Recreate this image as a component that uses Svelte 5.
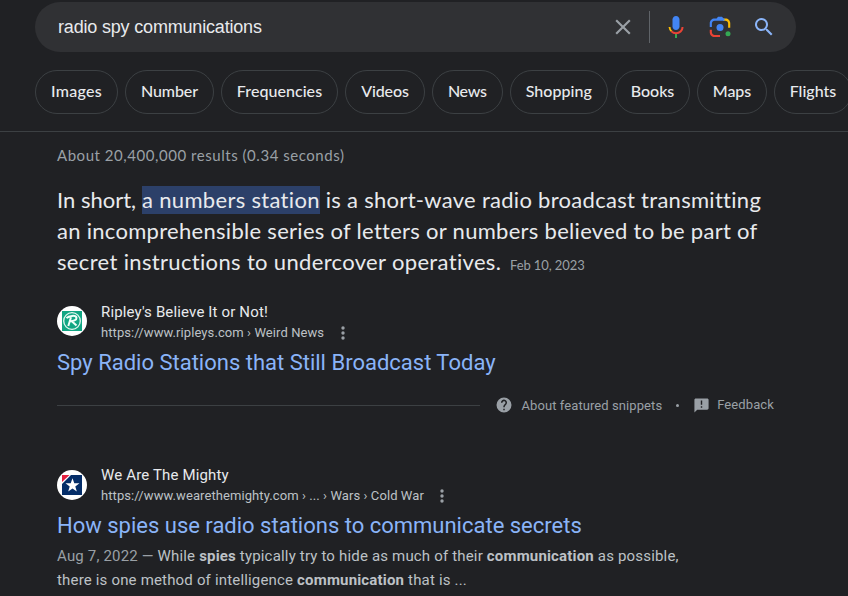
<script>
  const chips = [
    { label: 'Images', width: 83, spacing: 0.25 },
    { label: 'Number', width: 89, spacing: -0.1 },
    { label: 'Frequencies', width: 117, spacing: 0.05 },
    { label: 'Videos', width: 80, spacing: -0.1 },
    { label: 'News', width: 70.5, spacing: -0.3 },
    { label: 'Shopping', width: 98.5, spacing: 0.05 },
    { label: 'Books', width: 75, spacing: 0 },
    { label: 'Maps', width: 70, spacing: -0.05 },
    { label: 'Flights', width: 78, spacing: 0 }
  ];
</script>

<main>
  <header>
    <div class="search">
      <span class="query">radio spy communications</span>
      <svg class="clear" width="26" height="26" viewBox="0 0 24 24"><path fill="#9aa0a6" d="M19 6.41 17.59 5 12 10.59 6.41 5 5 6.41 10.59 12 5 17.59 6.41 19 12 13.41 17.59 19 19 17.59 13.41 12z" /></svg>
      <i class="divider"></i>
      <svg class="mic" width="24" height="24" viewBox="0 0 24 24">
        <path fill="#4285f4" d="M12 15c1.900 0 3.500-1.600 3.500-3.500v-7C15.500 2.600 13.900 1 12 1S8.500 2.600 8.500 4.500v7C8.500 13.400 10.100 15 12 15z" />
        <path fill="#34a853" d="M11 18.500h2V23h-2z" />
        <path fill="#fbbc04" d="M7 16.900A7.700 7.700 0 0 1 4.500 12h2c0 1.500.6 2.700 1.700 3.700z" />
        <path fill="#ea4335" d="M12 17.200c-1.600 0-2.900-.6-3.900-1.600l-1.400 1.300A7.400 7.400 0 0 0 12 19.200c4.200 0 7.500-3 7.500-7.200h-2c0 3-2.500 5.200-5.500 5.200z" />
      </svg>
      <svg class="lens" width="24" height="24" viewBox="0 0 192 192">
        <circle fill="#34a853" cx="160" cy="150" r="20" />
        <circle fill="#4285f4" cx="96" cy="100" r="28" />
        <path fill="#ea4335" d="M14 118v20c0 22 17 38 38 38h44v-17H54c-14 0-23-9-23-23v-18z" />
        <path fill="#fbbc04" d="M120 28h20c22 0 38 17 38 38v36h-17V68c0-14-9-23-23-23h-18z" />
        <path fill="#4285f4" d="M124 28 112 14H80L69 28H52c-21 0-38 17-38 38v29h17V68c0-14 9-23 23-23h78V28z" />
      </svg>
      <svg class="glass" width="24" height="24" viewBox="0 0 24 24"><path fill="#8ab4f8" d="M15.500 14h-.79l-.28-.27A6.500 6.500 0 1 0 13.730 14.430l.27.28v.79l5 4.990L20.490 19zM9.500 14a4.500 4.500 0 1 1 0-9 4.500 4.500 0 0 1 0 9z" /></svg>
    </div>
    <nav>
      {#each chips as chip}
        <a style:width="{chip.width}px" style:letter-spacing="{chip.spacing}px">{chip.label}</a>
      {/each}
    </nav>
  </header>

  <section class="results">
    <p class="stats">About 20,400,000 results (0.34 seconds)</p>
    <div class="answer">
      <div class="l1"><span class="lead">In short,</span> <mark>a numbers station</mark> is a short-wave radio broadcast transmitting</div>
      <div class="l2">an incomprehensible series of letters or numbers believed to be part of</div>
      <div class="l3"><span>secret instructions to undercover operatives.</span><time>Feb 10, 2023</time></div>
    </div>

    <article class="first">
      <div class="source">
        <svg class="favicon" width="30" height="30" viewBox="0 0 30 30">
          <circle cx="15" cy="15" r="15" fill="#fff" />
          <path fill="#11a683" d="M5 5h20v20H5z" />
          <circle cx="15" cy="15" r="8.300" fill="none" stroke="#e2f6ef" stroke-width="1.300" />
          <path d="M9.500 12.200c2-2.500 9.500-3.500 10-.4.300 2.300-3.500 3.300-6 3.400M14 11.300 11.300 20M14.800 15.300l4.700 4.200" fill="none" stroke="#f0fff9" stroke-width="2" />
        </svg>
        <div class="site">
          <div class="name">Ripley's Believe It or Not!</div>
          <div class="url"><span>https://www.ripleys.com › Weird News</span><svg width="4" height="14" viewBox="0 0 4 14" fill="#9aa0a6"><circle cx="2" cy="2" r="1.700" /><circle cx="2" cy="7" r="1.700" /><circle cx="2" cy="12" r="1.700" /></svg></div>
        </div>
      </div>
      <h3>Spy Radio Stations that Still Broadcast Today</h3>
    </article>

    <div class="about">
      <i class="rule"></i>
      <svg class="help" width="18" height="18" viewBox="0 0 24 24"><path fill="#9aa0a6" d="M12 2a10 10 0 1 0 0 20 10 10 0 0 0 0-20zm1 17h-2v-2h2zm2.070-7.750-.9.920C13.450 12.900 13 13.500 13 15h-2v-.5c0-1.100.45-2.100 1.170-2.830l1.240-1.260A2 2 0 1 0 10 9H8a4 4 0 1 1 7.070 2.250z" /></svg>
      <span class="snip">About featured snippets</span>
      <i class="dot"></i>
      <svg class="fb" width="17" height="17" viewBox="0 0 24 24"><path fill="#9aa0a6" d="M20 2H4c-1.100 0-2 .9-2 2v18l4-4h14c1.100 0 2-.9 2-2V4c0-1.100-.9-2-2-2zm-7 13h-2v-2h2zm0-4h-2V5h2z" /></svg>
      <span class="feed">Feedback</span>
    </div>

    <article class="second">
      <div class="source">
        <svg class="favicon" width="30" height="30" viewBox="0 0 30 30">
          <circle cx="15" cy="15" r="15" fill="#fff" />
          <path fill="#052e69" d="M5 5h20v20H5z" />
          <path fill="#fff" d="M5 5h9L5 14z" />
          <path fill="#e3203f" d="M5 5h7.500L5 12z" />
          <path fill="#fff" d="m15.500 8.300 1.800 5h5.200l-4.200 3.200 1.500 5.100-4.300-3-4.300 3 1.500-5.100-4.200-3.200h5.200z" />
        </svg>
        <div class="site">
          <div class="name">We Are The Mighty</div>
          <div class="url"><span>https://www.wearethemighty.com › ... › Wars › Cold War</span><svg width="4" height="14" viewBox="0 0 4 14" fill="#9aa0a6"><circle cx="2" cy="2" r="1.700" /><circle cx="2" cy="7" r="1.700" /><circle cx="2" cy="12" r="1.700" /></svg></div>
        </div>
      </div>
      <h3>How spies use radio stations to communicate secrets</h3>
      <div class="desc">
        <div><span class="date">Aug 7, 2022 —</span> While <b>spies</b> typically try to hide as much of their <b>communication</b> as possible,</div>
        <div>there is one method of intelligence <b>communication</b> that is ...</div>
      </div>
    </article>
  </section>
</main>

<style>
  :global(body) { background: #202124; }
  main { width: 848px; height: 596px; overflow: hidden; background: #202124; color: #e8eaed; font-family: Roboto, sans-serif; font-variant-ligatures: none; white-space: nowrap; }
  svg { display: block; flex: none; }
  i { display: block; flex: none; }
  header { box-sizing: border-box; height: 132px; padding: 2px 0 0 35px; border-bottom: 1px solid #3c4043; overflow: hidden; }
  .search { box-sizing: border-box; width: 761px; height: 50px; border-radius: 25px; background: #303134; display: flex; align-items: center; padding-left: 23px; }
  .query { width: 551.5px; font: 18px/24px "Liberation Sans", Arial, sans-serif; letter-spacing: -0.18px; }
  .divider { width: 1px; height: 32px; background: #5f6368; margin: 0 14px 0 13.5px; }
  .lens { margin-left: 20px; }
  .glass { margin-left: 20px; }
  nav { display: flex; gap: 7px; margin-top: 18px; }
  nav a { box-sizing: border-box; flex: none; height: 44px; border: 1px solid #3c4043; border-radius: 22px; font: 500 16px/40px Lato, sans-serif; text-align: center; }
  .results { padding-left: 57px; }
  .stats { margin: 0; padding-top: 13px; font: 15px/20px Lato, sans-serif; letter-spacing: 0.54px; color: #9aa0a6; }
  .answer { margin-top: 19px; font: 22px/31px Lato, sans-serif; letter-spacing: 0.29px; }
  .lead { letter-spacing: 0; }
  mark { background: #2c4069; color: inherit; padding-bottom: 1px; letter-spacing: 0.32px; }
  .l3 { display: flex; align-items: baseline; letter-spacing: 0.34px; }
  .l3 span { width: 453px; }
  time { font-size: 13px; letter-spacing: -0.1px; color: #9aa0a6; }
  .source { display: flex; align-items: center; }
  .favicon { margin-bottom: 3px; }
  .second .favicon { margin-bottom: 1px; }
  .first { margin-top: 21px; }
  .site { margin-left: 14px; }
  .name { font-size: 15px; line-height: 20px; letter-spacing: 0.15px; }
  .url { display: flex; align-items: center; font-size: 13px; line-height: 21px; letter-spacing: 0.085px; color: #bdc1c6; }
  .url svg { margin-left: 16.5px; }
  h3 { margin: 5px 0 0; font-size: 22px; font-weight: 400; line-height: 30px; color: #8ab4f8; }
  .about { display: flex; align-items: center; height: 20px; margin-top: 17px; font-size: 13px; color: #9aa0a6; }
  .rule { width: 423px; height: 1px; background: #3c4043; }
  .help { margin-left: 15px; }
  .snip { margin-left: 8.5px; letter-spacing: 0.08px; }
  .dot { width: 3px; height: 3px; border-radius: 50%; background: #9aa0a6; margin-left: 14px; }
  .fb { margin-left: 13.5px; }
  .feed { margin-left: 7.5px; line-height: 19px; padding-bottom: 1px; letter-spacing: 0.1px; }
  .second { margin-top: 50px; }
  .desc { margin-top: 3px; font-size: 15px; line-height: 24px; letter-spacing: 0.175px; color: #bdc1c6; }
  .date { color: #9aa0a6; }
</style>
